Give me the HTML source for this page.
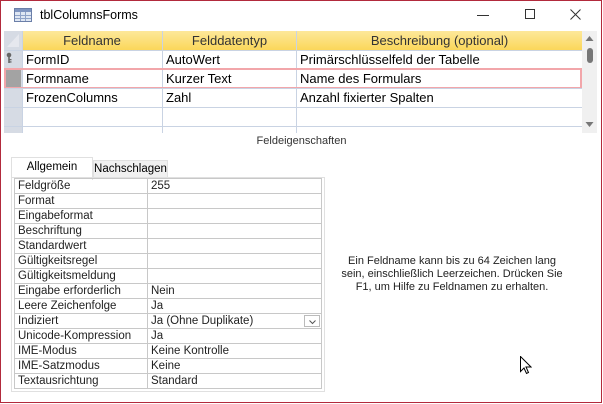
<!DOCTYPE html>
<html><head><meta charset="utf-8"><style>
*{margin:0;padding:0;box-sizing:border-box}
body{width:603px;height:404px;background:#fff;font-family:"Liberation Sans",sans-serif;position:relative;overflow:hidden;color:#000}
.abs{position:absolute}
.win{left:0;top:0;width:602px;height:403px;border:1px solid #b22a3c}
.t{font-size:12px;white-space:nowrap}
.hdr{background:linear-gradient(#fde89a,#fbd75a);}
.hl{background:#d6dbe4}
.cell{position:absolute;font-size:13px;line-height:19px;white-space:nowrap}
table{border-collapse:collapse;font-size:11.5px}
td{border:1px solid #c8c8c8;height:15px;padding:0 0 0 3px;line-height:13px;color:#222;white-space:nowrap}
</style></head><body>
<div class="abs win"></div>
<svg class="abs" style="left:14px;top:8px" width="18" height="14"><rect x="0.5" y="0.5" width="17" height="13" fill="#dfe7f3" stroke="#6b7fa8"/><rect x="1" y="1" width="16" height="3" fill="#7f95c0"/><path d="M1 7.5H17M1 10.5H17M6.5 4V13M11.5 4V13" stroke="#8fa3c8"/></svg>
<div class="abs t" style="left:40px;top:8px;font-size:12.5px">tblColumnsForms</div>
<div class="abs" style="left:477px;top:15px;width:12px;height:1px;background:#333"></div>
<div class="abs" style="left:525px;top:9px;width:10px;height:10px;border:1px solid #333"></div>
<svg class="abs" style="left:570px;top:9px" width="11" height="11"><path d="M0.5 0.5L10.5 10.5M10.5 0.5L0.5 10.5" stroke="#333"/></svg>

<div class="abs" style="left:4px;top:31px;width:593px;height:102px;background:#fff"></div>
<div class="abs hl" style="left:4px;top:31px;width:18px;height:102px"></div>
<div class="abs hdr" style="left:22px;top:31px;width:560px;height:19px"></div>
<svg class="abs" style="left:5px;top:32px" width="16" height="17"><path d="M14 2L2 15H14Z" fill="#e6e8ee"/></svg>
<div class="abs" style="left:4px;top:50px;width:578px;height:1px;background:#c9d3e3"></div>
<div class="abs" style="left:4px;top:107px;width:578px;height:1px;background:#c9d3e3"></div>
<div class="abs" style="left:4px;top:126px;width:578px;height:1px;background:#c9d3e3"></div>
<div class="abs" style="left:162px;top:31px;width:1px;height:102px;background:#c9d3e3"></div>
<div class="abs" style="left:296px;top:31px;width:1px;height:102px;background:#c9d3e3"></div>
<div class="abs" style="left:22px;top:31px;width:1px;height:102px;background:#c9d3e3"></div>
<svg class="abs" style="left:6px;top:52px" width="8" height="12"><circle cx="3" cy="3" r="2.3" fill="#666"/><rect x="2.2" y="4" width="1.6" height="7" fill="#666"/><rect x="3.5" y="7" width="2" height="1.3" fill="#666"/><rect x="3.5" y="9.3" width="2" height="1.3" fill="#666"/></svg>
<div class="abs" style="left:5px;top:70px;width:16px;height:17px;background:#a3a3a3"></div>
<div class="abs" style="left:4px;top:68px;width:578px;height:21px;border:2px solid #f2a6aa"></div>
<div class="abs" style="left:4px;top:88px;width:578px;height:1px;background:#c9d3e3"></div>
<div class="cell" style="left:22px;top:31px;width:140px;text-align:center;color:#333">Feldname</div>
<div class="cell" style="left:163px;top:31px;width:133px;text-align:center;color:#333">Felddatentyp</div>
<div class="cell" style="left:297px;top:31px;width:285px;text-align:center;color:#333">Beschreibung (optional)</div>
<div class="cell" style="left:26px;top:50px">FormID</div>
<div class="cell" style="left:166px;top:50px">AutoWert</div>
<div class="cell" style="left:300px;top:50px">Primärschlüsselfeld der Tabelle</div>
<div class="cell" style="left:26px;top:69px">Formname</div>
<div class="cell" style="left:166px;top:69px">Kurzer Text</div>
<div class="cell" style="left:300px;top:69px">Name des Formulars</div>
<div class="cell" style="left:26px;top:88px">FrozenColumns</div>
<div class="cell" style="left:166px;top:88px">Zahl</div>
<div class="cell" style="left:300px;top:88px">Anzahl fixierter Spalten</div>
<div class="abs" style="left:582px;top:31px;width:15px;height:102px;background:#f0f0f0"></div>
<svg class="abs" style="left:585px;top:35px" width="9" height="7"><path d="M0.5 6L4.5 1L8.5 6Z" fill="#777"/></svg>
<div class="abs" style="left:587px;top:48px;width:6px;height:15px;border-radius:3px;background:#777"></div>
<svg class="abs" style="left:585px;top:121px" width="9" height="7"><path d="M0.5 1L4.5 6L8.5 1Z" fill="#777"/></svg>

<div class="abs t" style="left:0;top:135px;width:603px;text-align:center;font-size:11px;color:#333">Feldeigenschaften</div>

<div class="abs" style="left:11px;top:157px;width:82px;height:23px;background:#fff;border:1px solid #e0e0e0;border-bottom:none"></div>
<div class="abs t" style="left:11px;top:161px;width:82px;text-align:center;font-size:11.5px">Allgemein</div>
<div class="abs" style="left:93px;top:160px;width:75px;height:18px;background:#f0f0f0;border:1px solid #e0e0e0"></div>
<div class="abs t" style="left:93px;top:163px;width:75px;text-align:center;font-size:11.5px">Nachschlagen</div>
<div class="abs" style="left:11px;top:177px;width:314px;height:215px;border:1px solid #e0e0e0"></div>
<table class="abs" style="left:14px;top:178px;width:308px">
<col style="width:133px"><col>
<tr><td>Feldgröße</td><td>255</td></tr>
<tr><td>Format</td><td></td></tr>
<tr><td>Eingabeformat</td><td></td></tr>
<tr><td>Beschriftung</td><td></td></tr>
<tr><td>Standardwert</td><td></td></tr>
<tr><td>Gültigkeitsregel</td><td></td></tr>
<tr><td>Gültigkeitsmeldung</td><td></td></tr>
<tr><td>Eingabe erforderlich</td><td>Nein</td></tr>
<tr><td>Leere Zeichenfolge</td><td>Ja</td></tr>
<tr><td>Indiziert</td><td style="position:relative">Ja (Ohne Duplikate)<span style="position:absolute;right:1px;top:1px;width:16px;height:12px;border:1px solid #bbb;background:#fff"><svg style="position:absolute;left:4px;top:4px" width="7" height="5"><path d="M0.5 0.5L3.5 3.5L6.5 0.5" stroke="#555" fill="none"/></svg></span></td></tr>
<tr><td>Unicode-Kompression</td><td>Ja</td></tr>
<tr><td>IME-Modus</td><td>Keine Kontrolle</td></tr>
<tr><td>IME-Satzmodus</td><td>Keine</td></tr>
<tr><td>Textausrichtung</td><td>Standard</td></tr>
</table>

<div class="abs" style="left:332px;top:255px;width:240px;text-align:center;font-size:11px;line-height:13px;color:#222;white-space:nowrap">Ein Feldname kann bis zu 64 Zeichen lang<br>sein, einschließlich Leerzeichen. Drücken Sie<br>F1, um Hilfe zu Feldnamen zu erhalten.</div>

<svg class="abs" style="left:520px;top:356px" width="12" height="19"><path d="M0.5 0.5V15.5L4 12L6.5 17.5L8.5 16.5L6 11H11Z" fill="#fff" stroke="#000"/></svg>
</body></html>
